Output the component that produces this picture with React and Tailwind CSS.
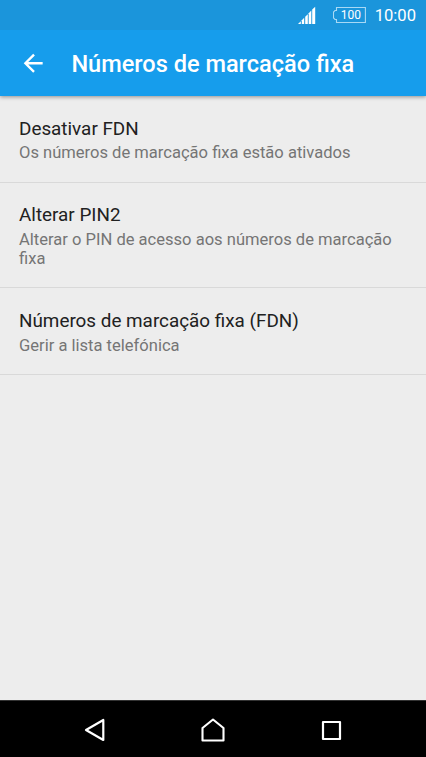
import React from 'react';

const items = [
  { title: 'Desativar FDN', summary: 'Os números de marcação fixa estão ativados' },
  { title: 'Alterar PIN2', summary: 'Alterar o PIN de acesso aos números de marcação fixa' },
  { title: 'Números de marcação fixa (FDN)', summary: 'Gerir a lista telefónica' },
];

const StatusBar = () => {
  return (
    <div className="relative z-10 h-[30px] shrink-0 bg-[#1b95db] flex items-center justify-end pr-[10px] text-white">
      <svg className="w-[18px] h-[18px] mr-[17px]" viewBox="0 0 18 18" fill="#fff">
        <path d="M0 18L2.8 15.2V18Z" />
        <path d="M3.8 14.2L6.2 11.8V18H3.8Z" />
        <path d="M7.2 10.8L9.8 8.2V18H7.2Z" />
        <path d="M10.7 7.2L13.3 4.5V18H10.7Z" />
        <path d="M14.2 3.6L17.2 0.8V18H14.2Z" />
      </svg>
      <div className="relative w-[33px] h-[17px] mr-[9px]">
        <svg className="absolute inset-0" width="33" height="17" viewBox="0 0 33 17" fill="none" stroke="#a9d9f5" strokeWidth="1.1">
          <path d="M3.5 0.5H32.4V15.5H3.5V12.5H2L0.5 11V5L2 3.5H3.5Z" />
        </svg>
        <span className="absolute left-[8px] top-[1px] text-[12px] leading-[14px]">100</span>
      </div>
      <span className="text-[16.6px] leading-[20px] pt-[2px]">10:00</span>
    </div>
  );
};

const Header = () => {
  return (
    <header className="relative h-[66px] shrink-0 bg-[#169dec] flex items-center pl-[19px] shadow-[0_1px_4px_rgba(0,0,0,0.4)]">
      <svg className="w-[28.4px] h-[28.4px]" viewBox="0 0 24 24" fill="#fff">
        <path d="M20 11H7.83l5.59-5.59L12 4l-8 8 8 8 1.41-1.41L7.83 13H20v-2z" />
      </svg>
      <h1 className="ml-[24px] pt-[2px] text-[23.55px] leading-[28px] font-medium text-white whitespace-nowrap">
        Números de marcação fixa
      </h1>
    </header>
  );
};

const NavBar = () => {
  return (
    <nav className="h-[57px] shrink-0 bg-black border-t border-[#333] flex items-center pt-[2px] pl-[84px]">
      <svg className="mr-[96px]" width="21" height="24" viewBox="0 0 21 24" fill="none" stroke="#fff" strokeWidth="2.2" strokeLinejoin="round">
        <path d="M2 12L19.3 2V22Z" />
      </svg>
      <svg className="mr-[96px]" width="24" height="24" viewBox="0 0 24 24" fill="none" stroke="#fff" strokeWidth="2.1" strokeLinejoin="round">
        <path d="M12 1.5L22.5 10V22.5H1.5V10Z" />
      </svg>
      <svg width="21" height="24" viewBox="0 0 21 24" fill="none" stroke="#fff" strokeWidth="2.2" strokeLinejoin="round">
        <path d="M2 4H19V21H2Z" />
      </svg>
    </nav>
  );
};

const App = () => {
  return (
    <div className="w-full h-screen flex flex-col bg-[#ededed] overflow-hidden font-[Roboto,sans-serif]">
      <StatusBar />
      <Header />
      <main className="flex-1">
        {items.map((item) => (
          <div key={item.title} className="px-[19px] pt-[20.6px] pb-[19.2px] border-b border-[#d9d9d9]">
            <div className="text-[18.87px] leading-[23px] text-[#212121]">{item.title}</div>
            <div className="mt-[3.8px] text-[16.56px] leading-[19px] text-[#757575]">{item.summary}</div>
          </div>
        ))}
      </main>
      <NavBar />
    </div>
  );
};

export default App;
